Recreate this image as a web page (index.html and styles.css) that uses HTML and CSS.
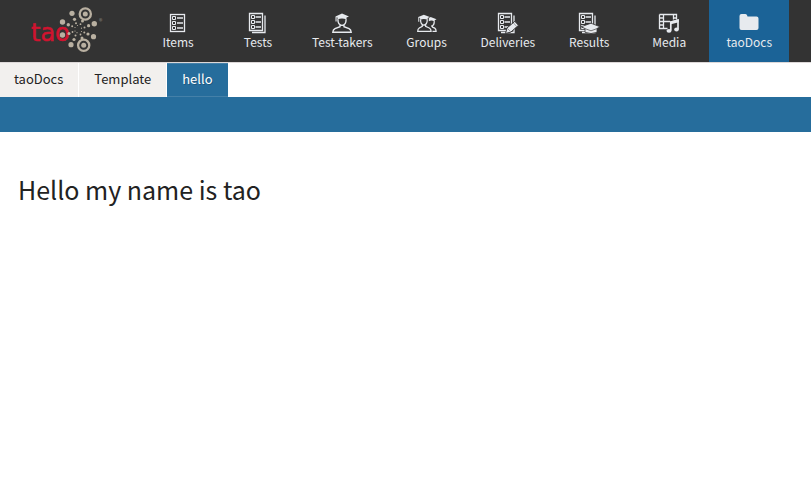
FILE: index.html
```html
<!DOCTYPE html>
<html lang="en">
<head>
<meta charset="utf-8">
<meta name="viewport" content="width=device-width, initial-scale=1">
<title>taoDocs</title>
<link rel="stylesheet" href="styles.css">
</head>
<body>
<svg class="defs" aria-hidden="true">
  <defs>
    <g id="list">
      <rect x="2.500" y="1.500" width="14" height="17" fill="none" stroke="currentColor" stroke-width="1.300"/>
      <g fill="none" stroke="currentColor">
        <path d="M4.500 3.500h3v3h-3zM4.500 8.500h3v3h-3zM4.500 13.500h3v3h-3z"/>
        <path d="M9 5h6M9 10h6M9 15h6" stroke-width="1.300"/>
      </g>
    </g>
    <g id="lists">
      <path d="M1.500.5h13v17h-13z" fill="none" stroke="currentColor" stroke-width="1.300"/>
      <g fill="none" stroke="currentColor">
        <path d="M3.500 2.500h3v3h-3zM3.500 7.500h3v3h-3zM3.500 12.500h3v3h-3z"/>
        <path d="M7.500 4h5.500M7.500 9h5.500M7.500 14h5.500" stroke-width="1.300"/>
        <path d="M17 2.500v17H4" stroke-width="1.300"/>
      </g>
    </g>
    <g id="student">
      <path d="M10 .5 17 3.400 14.500 4.600V6.500Q10 4.500 5.500 6.500V4.600L4.600 4.200V8.500H3.500V3.400z" fill="currentColor"/>
      <path d="M5.900 6.200Q5.900 12 10 12.400Q14.100 12 14.100 6.200M8 12v1.700L3 15.700Q1 16.700.8 19.200H19.200Q19 16.700 17 15.700L12 13.700V12" fill="none" stroke="currentColor" stroke-width="1.400"/>
    </g>
  </defs>
</svg>
<header class="topbar">
  <a class="logo" href="#" aria-label="TAO home">
    <svg width="80" height="54" viewBox="26 2 80 54">
      <text class="wordmark" x="31" y="41">tao</text>
      <g fill="#b9b0a1">
        <circle cx="62.500" cy="35" r="2.700"/><circle cx="62.500" cy="22" r="2.700"/><circle cx="72" cy="13.300" r="2.600"/><circle cx="94.300" cy="23.700" r="2.700"/><circle cx="93.500" cy="36.700" r="2.600"/><circle cx="71" cy="44.700" r="2.600"/>
        <circle cx="85.300" cy="14" r="2.500"/><circle cx="83.700" cy="45.300" r="2.500"/>
        <circle cx="68.300" cy="24.700" r="1.700"/><circle cx="74.500" cy="19.300" r="1.600"/><circle cx="82.500" cy="21" r="1.500"/><circle cx="88.600" cy="25.700" r="1.600"/><circle cx="88" cy="34" r="1.600"/><circle cx="82" cy="38" r="1.500"/><circle cx="74" cy="39.500" r="1.600"/><circle cx="69" cy="33.500" r="1.500"/>
        <circle cx="72.200" cy="26.300" r="1"/><circle cx="76" cy="23.300" r="1"/><circle cx="80.500" cy="24.200" r=".9"/><circle cx="84.500" cy="27.500" r="1"/><circle cx="84.300" cy="32.500" r="1"/><circle cx="80.500" cy="34.500" r=".9"/><circle cx="75.500" cy="35.600" r="1"/><circle cx="72.500" cy="32" r=".9"/>
        <circle cx="75" cy="27.500" r=".6"/><circle cx="77.500" cy="25.500" r=".6"/><circle cx="81.500" cy="28.200" r=".6"/><circle cx="81.500" cy="31.500" r=".6"/><circle cx="77" cy="32.700" r=".6"/><circle cx="75" cy="31" r=".6"/>
      </g>
      <circle cx="85.300" cy="14" r="5.600" fill="none" stroke="#b9b0a1" stroke-width="2.300"/>
      <circle cx="83.700" cy="45.300" r="5.600" fill="none" stroke="#b9b0a1" stroke-width="2.300"/>
      <text class="registered" x="99" y="24">®</text>
    </svg>
  </a>
  <nav class="main-nav" aria-label="Main">
    <a href="#"><svg class="icon" viewBox="0 0 20 20"><use href="#list"/></svg>Items</a>
    <a href="#"><svg class="icon" viewBox="0 0 20 20"><use href="#lists"/></svg>Tests</a>
    <a href="#"><svg class="icon" viewBox="0 0 20 20"><use href="#student"/></svg>Test-takers</a>
    <a href="#"><svg class="icon" viewBox="0 0 22 20">
      <path d="M15 3.500 21.500 6 19.500 7v1.500Q16 6.500 13 8V4.500z" fill="currentColor"/>
      <path d="M19 8Q19 13 15.500 13.500M17 13.200v1.200l2.500 1.200Q21 16.500 21 19.200H17" fill="none" stroke="currentColor" stroke-width="1.400"/>
      <path d="M7.500.8 14 3.400 11.800 4.600V6.500Q7.500 4.500 3.400 6.500V4.600L2.500 4.200V8.500H1.400V3.400z" fill="currentColor"/>
      <path d="M3.900 6.200Q3.900 12 7.500 12.400Q11.300 12 11.300 6.200M5.800 12v1.700L2.500 15.500Q.8 16.500.8 19.200H15.500Q15.500 16.500 13.500 15.500L9.500 13.700V12" fill="none" stroke="currentColor" stroke-width="1.400"/>
    </svg>Groups</a>
    <a href="#"><svg class="icon" viewBox="0 0 20 20"><use href="#lists" x="-1"/>
      <path d="m7.500 20.500 1.500-5.500L16.800 8.300l3.700 4-7.500 6.700z" fill="currentColor" stroke="#333" stroke-width="1"/>
      <path d="m15.500 10 3.200 3.500M9.500 15.500l3 3" stroke="#777" stroke-width=".7"/>
    </svg>Deliveries</a>
    <a href="#"><svg class="icon" viewBox="0 0 20 20"><use href="#lists" x="-1"/>
      <path d="M2 13.800 12 10.200l9 3.600-3 1.700v3.800Q12 21.800 6 19.300v-3.800z" fill="currentColor" stroke="#333" stroke-width=".8"/>
      <path d="m6 15.600 6 2.200 6-2.200" fill="none" stroke="#555" stroke-width=".8"/>
    </svg>Results</a>
    <a href="#"><svg class="icon" viewBox="0 0 20 20">
      <path d="M.5 1.500h17v5M.5 1.500v14h8M4.500 1.500v14M14.500 1.500v5M4.500 8.500H11M1 5h3.300M1 8.500h3.300M1 12h3.300M14.500 5h3" fill="none" stroke="currentColor" stroke-width="1.300"/>
      <path d="M11.800 17.500V9.200l7.200-2v9" fill="none" stroke="currentColor" stroke-width="1.700"/>
      <path d="m11 8.500 8.800-2.300v3L11 11.500z" fill="currentColor"/>
      <ellipse cx="10" cy="17.800" rx="2.500" ry="1.900" fill="currentColor"/><ellipse cx="17.500" cy="16.500" rx="2.300" ry="1.900" fill="currentColor"/>
    </svg>Media</a>
    <a class="current" href="#" aria-current="page"><svg class="icon" viewBox="0 0 20 20"><path d="M.5 3Q.5 1 2.500 1H6.500Q8.300 1 8.500 3.500H17.500Q19.500 3.500 19.500 5.500V15Q19.500 17 17.500 17H2.500Q.5 17 .5 15z" fill="currentColor"/></svg>taoDocs</a>
  </nav>
</header>
<nav class="tabs" aria-label="Sections">
  <a href="#">taoDocs</a>
  <a href="#">Template</a>
  <a class="active" href="#" aria-current="page">hello</a>
</nav>
<div class="action-bar"></div>
<main>
  <h1>Hello my name is tao</h1>
</main>
</body>
</html>
```
FILE: styles.css
```css
* {
  box-sizing: border-box;
}

body {
  margin: 0;
  background: #fff;
  color: #222;
  font-family: "Noto Sans CJK SC", "Open Sans", sans-serif;
  font-size: 13px;
}

a {
  color: inherit;
  text-decoration: none;
}

.defs {
  position: absolute;
  width: 0;
  height: 0;
}

.topbar {
  display: flex;
  height: 63px;
  background: #333;
  border-bottom: 1px solid #ddd8d8;
}

.logo {
  flex: none;
  width: 138px;
  padding: 2px 0 0 26px;
}

.logo svg {
  display: block;
}

.wordmark {
  fill: #d0132f;
  stroke: #d0132f;
  stroke-width: 0.5px;
  font-family: "DejaVu Sans", sans-serif;
  font-size: 24px;
}

.registered {
  fill: #8a857d;
  font-size: 7px;
}

.main-nav {
  display: flex;
}

.main-nav a {
  display: flex;
  flex-direction: column;
  align-items: center;
  min-width: 80px;
  padding: 13px 14px 0;
  color: #e7eaee;
  font-size: 12px;
  line-height: 18px;
}

.main-nav .current {
  background: #1b6397;
}

.icon {
  width: 20px;
  height: 20px;
  overflow: visible;
}

.tabs {
  display: flex;
  gap: 1px;
}

.tabs a {
  height: 34px;
  padding: 0 15px;
  background: #f2f0ee;
  border-top: 1px solid #f2f0ee;
  line-height: 30px;
}

.tabs a:first-child {
  padding-left: 14px;
}

.tabs .active {
  background: #266d9c;
  border-top-color: #4480a8;
  border-bottom: 1px solid #4480a8;
  color: #fff;
  text-shadow: 1px 1px 0 #0003;
}

.action-bar {
  height: 35px;
  background: #266d9c;
}

main {
  padding: 39px 18px;
}

h1 {
  margin: 0;
  font-size: 25px;
  font-weight: 400;
  line-height: 36px;
}
```
